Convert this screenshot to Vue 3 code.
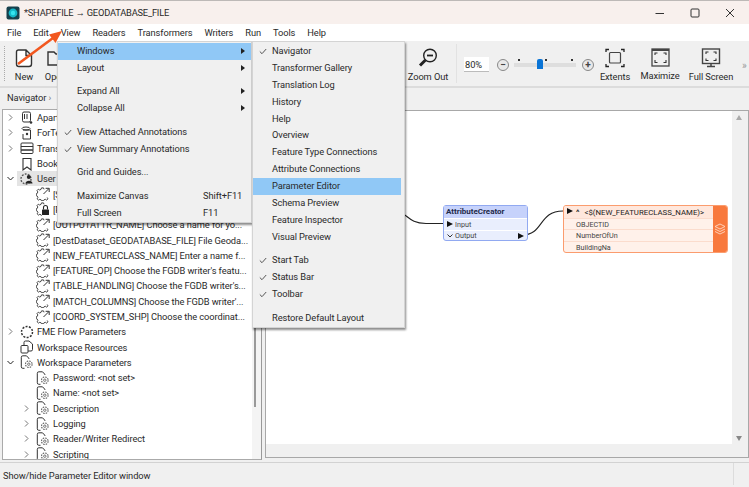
<template>
    <div class="app">
        <svg class="defs" width="0" height="0">
            <symbol id="gearlink" viewBox="0 0 14 14">
                <path d="M8 2.300L7.500 0.900H5.500L5 2.400L3.600 3L2.300 2.200L1 3.600L1.800 4.900L1.300 6.300L0.300 6.700V8.700L1.300 9.100L1.900 10.500L1.100 11.800L2.500 13.100L3.800 12.300L5.200 12.900L5.500 13.700H7.500L7.900 12.900L9.300 12.300L10.600 13.100L12 11.800L11.200 10.500" fill="none" stroke="#444" stroke-width="1"/>
                <path d="M7.500 7L12.800 1.700M9.600 1.300H13.200V5" fill="none" stroke="#333" stroke-width="1"/>
            </symbol>
            <symbol id="gearlock" viewBox="0 0 14 14">
                <path d="M8 2.300L7.500 0.900H5.500L5 2.400L3.600 3L2.300 2.200L1 3.600L1.800 4.900L1.300 6.300L0.300 6.700V8.700L1.300 9.100L1.900 10.500L1.100 11.800L2.500 13.100L3.800 12.300L5.200 12.900L5.500 13.700" fill="none" stroke="#444" stroke-width="1"/>
                <rect x="6" y="7.500" width="7" height="5.500" rx="0.500" fill="#222"/>
                <path d="M7.500 7.500V5.500a2 2 0 0 1 4 0V7.500" fill="none" stroke="#222" stroke-width="1.100"/>
            </symbol>
            <symbol id="filegear" viewBox="0 0 14 14">
                <path d="M4.500 13.300H2.800A1.500 1.500 0 0 1 1.300 11.800V2.300A1.500 1.500 0 0 1 2.800 0.800H6.500L8.800 3.200V4" fill="none" stroke="#333" stroke-width="1"/>
                <circle cx="8.800" cy="9.200" r="1.200" fill="none" stroke="#555" stroke-width="0.800"/>
                <circle cx="8.800" cy="9.200" r="3.300" fill="none" stroke="#555" stroke-width="1.100" stroke-dasharray="1.500 1.100"/>
            </symbol>
        </svg>

        <!-- title -->
        <div class="titlebar">
            <svg class="app-icon" width="14" height="14" viewBox="0 0 14 14">
                <rect x="0.500" y="0.500" width="13" height="13" rx="2" fill="#17404c"/>
                <circle cx="7" cy="7" r="4.400" fill="#14b8c8"/>
                <circle cx="7" cy="7" r="2.200" fill="#35e4ee"/>
            </svg>
            <span class="title-text">*SHAPEFILE → GEODATABASE_FILE</span>
            <div class="win-controls">
                <svg width="12" height="12" viewBox="0 0 12 12"><path d="M1.500 6.500H10" stroke="#333" stroke-width="1"/></svg>
                <svg width="12" height="12" viewBox="0 0 12 12"><rect x="2" y="2" width="8" height="8" rx="1" fill="none" stroke="#333" stroke-width="1"/></svg>
                <svg width="12" height="12" viewBox="0 0 12 12"><path d="M2 2L10 10M10 2L2 10" stroke="#333" stroke-width="1"/></svg>
            </div>
        </div>

        <div class="menubar">
            <span v-for="m in menus" :key="m">{{ m }}</span>
        </div>

        <!-- toolbar -->
        <div class="toolbar">
            <div class="grip"></div>
            <div class="tool tool-new">
                <svg width="20" height="20" viewBox="0 0 20 20">
                    <path d="M4.500 2H12L17.500 7.500V16A2.500 2.500 0 0 1 15 18.500H5A2.500 2.500 0 0 1 2.500 16V4A2 2 0 0 1 4.500 2ZM12 2V7.500H17.500" fill="#fff" stroke="#333" stroke-width="1.400"/>
                </svg>
                <span>New</span>
            </div>
            <div class="tool tool-open">
                <svg width="20" height="20" viewBox="0 0 20 20">
                    <path d="M2 17V4H8L10 6H18V17Z" fill="none" stroke="#333" stroke-width="1.400"/>
                </svg>
                <span>Open</span>
            </div>
            <div class="tool tool-zoom">
                <svg width="22" height="20" viewBox="0 0 22 20">
                    <circle cx="13" cy="7.500" r="6.300" fill="none" stroke="#222" stroke-width="1.400"/>
                    <path d="M10 7.500H16" stroke="#222" stroke-width="1.800"/>
                    <path d="M8.500 12L3 17.500" stroke="#222" stroke-width="3"/>
                </svg>
                <span>Zoom Out</span>
            </div>
            <div class="tool-sep"></div>
            <div class="zoom-input">80%</div>
            <div class="zoom-btn zoom-minus">−</div>
            <div class="slider">
                <i class="tick t1"></i><i class="tick t2"></i><i class="tick t3"></i>
                <i class="thumb"></i>
            </div>
            <div class="zoom-btn zoom-plus">+</div>
            <div class="tool tool-extents">
                <svg width="20" height="20" viewBox="0 0 20 20">
                    <rect x="4.500" y="4.500" width="11" height="10.500" rx="1" fill="none" stroke="#444" stroke-width="1.200"/>
                    <path d="M1 4V1.500H4M16 1.500H19V4M19 16V18.500H16M4 18.500H1V16" fill="none" stroke="#222" stroke-width="1.300"/>
                </svg>
                <span>Extents</span>
            </div>
            <div class="tool tool-max">
                <svg width="19" height="19" viewBox="0 0 19 19">
                    <rect x="1" y="1" width="17" height="17" fill="none" stroke="#444" stroke-width="1.300"/>
                    <path d="M1 2H18" stroke="#444" stroke-width="2"/>
                    <path d="M4 7V5H6.500M12.500 5H15V7M15 12V14.500H12.500M6.500 14.500H4V12" fill="none" stroke="#333" stroke-width="1.100"/>
                </svg>
                <span>Maximize</span>
            </div>
            <div class="tool tool-full">
                <svg width="20" height="20" viewBox="0 0 20 20">
                    <rect x="1.500" y="1" width="17" height="14.500" fill="none" stroke="#444" stroke-width="1.400"/>
                    <path d="M5 6V4H7.500M12.500 4H15V6M15 10.500V12.500H12.500M7.500 12.500H5V10.500" fill="none" stroke="#333" stroke-width="1.100"/>
                    <path d="M6 18.500H14M10 15.500V18.500" stroke="#444" stroke-width="1.500"/>
                </svg>
                <span>Full Screen</span>
            </div>
            <div class="more">»</div>
        </div>

        <!-- main area -->
        <div class="work">
            <div class="left">
                <div class="strip left-strip">Navigator <span class="strip-x">›</span></div>
                <div class="left-body">
                    <div class="tree">
                        <div
                            v-for="row in tree"
                            :key="row.text"
                            class="row"
                            :class="{ child: row.depth === 1 }"
                        >
                            <span class="twisty">
                                <svg v-if="row.twisty" width="7" height="7" viewBox="0 0 7 7">
                                    <path
                                        :d="row.twisty === 'open' ? 'M0.500 2L3.500 5L6.500 2' : 'M2 0.500L5 3.500L2 6.500'"
                                        fill="none"
                                        :stroke="row.twisty === 'open' ? '#222' : '#777'"
                                        stroke-width="1"
                                    />
                                </svg>
                            </span>
                            <span class="row-main" :class="{ picked: row.picked }">
                                <svg class="row-icon" width="14" height="14" viewBox="0 0 14 14">
                                    <template v-if="row.icon === 'source'">
                                        <rect x="2.500" y="1" width="8" height="10" rx="1.500" fill="none" stroke="#333"/>
                                        <path d="M4.500 3V8M7 3V8" stroke="#333"/>
                                        <circle cx="11" cy="11.500" r="1.300" fill="#333"/>
                                    </template>
                                    <template v-else-if="row.icon === 'dest'">
                                        <path d="M3 4H10.500V13H3V8" fill="none" stroke="#333"/>
                                        <ellipse cx="6" cy="2.500" rx="4" ry="1.500" fill="none" stroke="#333"/>
                                        <circle cx="7" cy="8" r="1.200" fill="#333"/>
                                    </template>
                                    <template v-else-if="row.icon === 'stack'">
                                        <rect x="1" y="2" width="12" height="3.500" rx="1" fill="none" stroke="#333"/>
                                        <rect x="1" y="5.500" width="12" height="3.500" fill="none" stroke="#333"/>
                                        <rect x="1" y="9" width="12" height="3.500" rx="1" fill="none" stroke="#333"/>
                                    </template>
                                    <path v-else-if="row.icon === 'mark'" d="M3 1.500H11V13L7 10L3 13Z" fill="none" stroke="#333" stroke-width="1.100"/>
                                    <template v-else-if="row.icon === 'user'">
                                        <circle cx="6" cy="7" r="5" fill="none" stroke="#555" stroke-width="1.400" stroke-dasharray="1.800 1.300"/>
                                        <circle cx="8.800" cy="5" r="2" fill="#222"/>
                                        <path d="M5.500 11.500C5.500 7.800 12.500 7.800 12.500 11.500Z" fill="#222"/>
                                    </template>
                                    <circle v-else-if="row.icon === 'flow'" cx="7" cy="7" r="5.500" fill="none" stroke="#333" stroke-width="1.500" stroke-dasharray="2 1.400"/>
                                    <template v-else-if="row.icon === 'res'">
                                        <rect x="1" y="5.500" width="7" height="7.500" rx="1" fill="none" stroke="#333"/>
                                        <path d="M4 5.500V2.500A1.500 1.500 0 0 1 5.500 1H9L12.500 4V9.500A1.500 1.500 0 0 1 11 11H8" fill="none" stroke="#333"/>
                                    </template>
                                    <use v-else :href="'#' + row.icon" width="14" height="14"/>
                                </svg>
                                <span class="row-text">{{ row.text }}</span>
                            </span>
                        </div>
                    </div>
                    <div class="tree-scroll"><i></i></div>
                </div>
            </div>

            <div class="splitter"></div>

            <div class="right">
                <div class="strip"></div>
                <div class="canvas-frame">
                    <div class="canvas-row">
                        <div class="canvas">
                            <svg class="wires" width="466" height="336" viewBox="0 0 466 336">
                                <path d="M125 98C143 101 140 112 160 112.500L180 112.500" fill="none" stroke="#222" stroke-width="1.100"/>
                                <path d="M256 124C278 124 272 100 297 100" fill="none" stroke="#222" stroke-width="1.100"/>
                            </svg>
                            <div class="node creator">
                                <div class="creator-head">AttributeCreator</div>
                                <div class="creator-row">
                                    <i class="port"></i><span class="row-label">Input</span>
                                </div>
                                <div class="creator-row">
                                    <svg class="out-chev" width="6" height="6" viewBox="0 0 6 6"><path d="M0.500 1.500L3 4L5.500 1.500" fill="none" stroke="#333"/></svg>
                                    <span class="row-label">Output</span>
                                    <i class="port port-out"></i>
                                </div>
                            </div>
                            <div class="node writer">
                                <div class="writer-main">
                                    <div class="writer-head">
                                        <i class="port"></i>
                                        <span class="caret">^</span>
                                        <span>&lt;$(NEW_FEATURECLASS_NAME)&gt;</span>
                                    </div>
                                    <div v-for="a in attrs" :key="a" class="writer-row">{{ a }}</div>
                                </div>
                                <div class="writer-side">
                                    <svg width="12" height="12" viewBox="0 0 12 12">
                                        <path d="M6 1L11 3.500L6 6L1 3.500Z M1 6L6 8.500L11 6 M1 8.500L6 11L11 8.500" fill="none" stroke="#ffd9c4" stroke-width="0.900"/>
                                    </svg>
                                </div>
                            </div>
                        </div>
                        <div class="vscroll">
                            <i class="arrow-up"></i>
                            <i class="arrow-down"></i>
                        </div>
                    </div>
                    <div class="hscroll"></div>
                </div>
            </div>
        </div>

        <div class="statusbar">
            <span>Show/hide Parameter Editor window</span>
            <i class="status-grip"></i>
        </div>

        <!-- open menus -->
        <div class="menu view-menu">
            <template v-for="(item, i) in viewMenu" :key="i">
                <div v-if="item.gap" class="menu-gap"></div>
                <div v-else class="menu-item" :class="{ hot: item.hot }">
                    <svg v-if="item.check" class="check" width="8" height="7" viewBox="0 0 8 7"><path d="M0.800 3.500L3 5.700L7.200 1" fill="none" stroke="#555" stroke-width="1"/></svg>
                    <span>{{ item.label }}</span>
                    <span v-if="item.key" class="shortcut">{{ item.key }}</span>
                    <i v-if="item.sub" class="sub-arrow"></i>
                </div>
            </template>
        </div>
        <div class="menu windows-menu">
            <template v-for="(item, i) in windowsMenu" :key="i">
                <div v-if="item.gap" class="menu-gap"></div>
                <div v-else class="menu-item" :class="{ hot: item.hot }">
                    <svg v-if="item.check" class="check" width="8" height="7" viewBox="0 0 8 7"><path d="M0.800 3.500L3 5.700L7.200 1" fill="none" stroke="#555" stroke-width="1"/></svg>
                    <span>{{ item.label }}</span>
                </div>
            </template>
        </div>

        <!-- callout arrow -->
        <svg class="callout" width="70" height="70" viewBox="0 0 70 70">
            <path d="M18 64L53 38" stroke="#f2571f" stroke-width="2.600"/>
            <path d="M62 31L49 34.500L55.500 43Z" fill="#f2571f"/>
        </svg>
    </div>
</template>

<script setup>
    const menus = ["File", "Edit", "View", "Readers", "Transformers", "Writers", "Run", "Tools", "Help"];

    const attrs = ["OBJECTID", "NumberOfUn", "BuildingNa"];

    const tree = [
        { text: "Apartments [SHAPEFILE]", icon: "source", twisty: "closed", depth: 0 },
        { text: "ForTesting [FILEGDB]", icon: "dest", twisty: "closed", depth: 0 },
        { text: "Transformers", icon: "stack", twisty: "closed", depth: 0 },
        { text: "Bookmarks", icon: "mark", depth: 0 },
        { text: "User Parameters", icon: "user", twisty: "open", depth: 0, picked: true },
        { text: "[SourceDataset_SHAPEFILE]", icon: "gearlink", depth: 1 },
        { text: "[PASSWORD]", icon: "gearlock", depth: 1 },
        { text: "[OUTPUTATTR_NAME] Choose a name for yo...", icon: "gearlink", depth: 1 },
        { text: "[DestDataset_GEODATABASE_FILE] File Geoda...", icon: "gearlink", depth: 1 },
        { text: "[NEW_FEATURECLASS_NAME] Enter a name f...", icon: "gearlink", depth: 1 },
        { text: "[FEATURE_OP] Choose the FGDB writer's featu...", icon: "gearlink", depth: 1 },
        { text: "[TABLE_HANDLING] Choose the FGDB writer's...", icon: "gearlink", depth: 1 },
        { text: "[MATCH_COLUMNS] Choose the FGDB writer'...", icon: "gearlink", depth: 1 },
        { text: "[COORD_SYSTEM_SHP] Choose the coordinat...", icon: "gearlink", depth: 1 },
        { text: "FME Flow Parameters", icon: "flow", twisty: "closed", depth: 0 },
        { text: "Workspace Resources", icon: "res", depth: 0 },
        { text: "Workspace Parameters", icon: "filegear", twisty: "open", depth: 0 },
        { text: "Password: <not set>", icon: "filegear", depth: 1 },
        { text: "Name: <not set>", icon: "filegear", depth: 1 },
        { text: "Description", icon: "filegear", twisty: "closed", depth: 1 },
        { text: "Logging", icon: "filegear", twisty: "closed", depth: 1 },
        { text: "Reader/Writer Redirect", icon: "filegear", twisty: "closed", depth: 1 },
        { text: "Scripting", icon: "filegear", twisty: "closed", depth: 1 },
    ];

    const viewMenu = [
        { label: "Windows", sub: true, hot: true },
        { label: "Layout", sub: true },
        { gap: true },
        { label: "Expand All", sub: true },
        { label: "Collapse All", sub: true },
        { gap: true },
        { label: "View Attached Annotations", check: true },
        { label: "View Summary Annotations", check: true },
        { gap: true },
        { label: "Grid and Guides..." },
        { gap: true },
        { label: "Maximize Canvas", key: "Shift+F11" },
        { label: "Full Screen", key: "F11" },
    ];

    const windowsMenu = [
        { label: "Navigator", check: true },
        { label: "Transformer Gallery" },
        { label: "Translation Log" },
        { label: "History" },
        { label: "Help" },
        { label: "Overview" },
        { label: "Feature Type Connections" },
        { label: "Attribute Connections" },
        { label: "Parameter Editor", hot: true },
        { label: "Schema Preview" },
        { label: "Feature Inspector" },
        { label: "Visual Preview" },
        { gap: true },
        { label: "Start Tab", check: true },
        { label: "Status Bar", check: true },
        { label: "Toolbar", check: true },
        { gap: true },
        { label: "Restore Default Layout" },
    ];
</script>

<style>
    html,
    body {
        margin: 0;
        background: #fff;
    }
</style>

<style scoped>
    .app {
        position: relative;
        width: 749px;
        height: 487px;
        display: flex;
        flex-direction: column;
        overflow: hidden;
        font-family: Roboto, "Liberation Sans", sans-serif;
        font-size: 9.300px;
        letter-spacing: -0.090px;
        color: #2a2a2a;
        background: #f0f0f0;
    }

    .defs {
        position: absolute;
    }

    .titlebar {
        height: 24px;
        flex: none;
        box-sizing: border-box;
        border-top: 1px solid #bdb9b7;
        background: #f8f0ed;
        display: flex;
        align-items: center;
        padding-left: 6px;
    }

    .title-text {
        margin-left: 4px;
        font-size: 9.300px;
        letter-spacing: -0.200px;
    }

    .win-controls {
        margin-left: auto;
        display: flex;
        gap: 23px;
        padding-right: 13px;
    }

    .menubar {
        height: 17px;
        flex: none;
        background: #fff;
        display: flex;
        align-items: center;
        gap: 12px;
        padding-left: 7px;
    }

    .toolbar {
        height: 47px;
        flex: none;
        box-sizing: border-box;
        background: #f0f0f0;
        border-bottom: 2px solid #dcdcdc;
        display: flex;
        position: relative;
    }

    .grip {
        width: 1px;
        margin: 5px 0 5px 4px;
        border-left: 1px dotted #aaa;
    }

    .tool {
        display: flex;
        flex-direction: column;
        align-items: center;
        padding-top: 7px;
        flex: none;
    }

    .tool span {
        margin-top: 2px;
        line-height: 14px;
        white-space: nowrap;
    }

    .tool-new {
        width: 34px;
        margin-left: 1px;
    }

    .tool-open {
        width: 29px;
    }

    .tool-zoom {
        width: 46px;
        margin-left: 335px;
    }

    .tool-sep {
        width: 1px;
        margin: 3px 0 3px 5px;
        background: #e2e2e2;
    }

    .zoom-input {
        width: 25px;
        height: 15px;
        margin: 16px 0 0 7px;
        background: #fff;
        border-bottom: 1px solid #bbb;
        line-height: 15px;
        padding-left: 1px;
        box-sizing: border-box;
    }

    .zoom-btn {
        width: 10px;
        height: 10px;
        margin-top: 18px;
        border: 1px solid #888;
        border-radius: 50%;
        background: #e8e8e8;
        line-height: 9px;
        font-size: 10px;
        font-weight: 700;
        text-align: center;
        color: #444;
    }

    .zoom-minus {
        margin-left: 8px;
    }

    .zoom-plus {
        margin-left: 6px;
    }

    .slider {
        position: relative;
        width: 62px;
        height: 4px;
        margin: 22px 0 0 5px;
        background: #dedede;
    }

    .tick {
        position: absolute;
        top: -4px;
        width: 1.500px;
        height: 1.500px;
        background: #333;
    }

    .t1 {
        left: 4px;
    }

    .t2 {
        left: 31px;
    }

    .t3 {
        left: 57px;
    }

    .thumb {
        position: absolute;
        left: 23px;
        top: -4px;
        width: 6px;
        height: 10px;
        background: #0a74d6;
        border-radius: 2px 2px 0 0;
    }

    .tool-extents {
        width: 36px;
        margin-left: 3px;
    }

    .tool-max {
        width: 46px;
        margin-left: 4px;
    }

    .tool-full {
        width: 50px;
        margin-left: 3px;
    }

    .more {
        margin: 19px 0 0 6px;
        color: #999;
        font-size: 10px;
    }

    .work {
        flex: 1;
        min-height: 0;
        display: flex;
    }

    .strip {
        height: 22px;
        flex: none;
        line-height: 20px;
        box-sizing: border-box;
        padding-left: 7px;
    }

    .left-strip {
        height: 21px;
    }

    .strip-x {
        color: #777;
    }

    .left {
        width: 262px;
        flex: none;
        display: flex;
        flex-direction: column;
    }

    .left-body {
        flex: 1;
        min-height: 0;
        margin-bottom: 2px;
        margin-left: 2px;
        display: flex;
        background: #fff;
        border: 1px solid #aaa;
        border-right: 1px solid #999;
        overflow: hidden;
    }

    .tree {
        width: 249px;
        flex: none;
        overflow: hidden;
    }

    .row {
        display: flex;
        align-items: center;
        height: 15.300px;
        white-space: nowrap;
    }

    .row.child {
        padding-left: 16px;
    }

    .twisty {
        width: 14px;
        flex: none;
        display: flex;
        justify-content: center;
        padding-left: 1px;
        box-sizing: border-box;
    }

    .row-main {
        display: flex;
        align-items: center;
        height: 100%;
        padding-left: 3px;
    }

    .picked {
        background: #e4e4e4;
    }

    .row-icon {
        flex: none;
        margin-right: 3px;
    }

    .tree-scroll {
        flex: 1;
        background: #f4f4f4;
        position: relative;
    }

    .tree-scroll i {
        position: absolute;
        left: 2px;
        top: 100px;
        bottom: 52px;
        width: 2px;
        background: #9a9a9a;
    }

    .splitter {
        width: 3px;
        flex: none;
    }

    .right {
        flex: 1;
        min-width: 0;
        display: flex;
        flex-direction: column;
    }

    .canvas-frame {
        flex: 1;
        min-height: 0;
        margin-bottom: 4px;
        border: 1px solid #a8a8a8;
        display: flex;
        flex-direction: column;
    }

    .canvas-row {
        flex: 1;
        min-height: 0;
        display: flex;
    }

    .canvas {
        flex: 1;
        position: relative;
        background: #fff;
        overflow: hidden;
    }

    .wires {
        position: absolute;
        left: 0;
        top: 0;
    }

    .vscroll {
        width: 16px;
        flex: none;
        position: relative;
        background: #f0f0f0;
    }

    .arrow-up,
    .arrow-down {
        position: absolute;
        left: 4px;
        width: 0;
        height: 0;
        border-left: 3.500px solid transparent;
        border-right: 3.500px solid transparent;
    }

    .arrow-up {
        top: 4px;
        border-bottom: 5px solid #aaa;
    }

    .arrow-down {
        bottom: 3px;
        border-top: 5px solid #888;
    }

    .hscroll {
        height: 13px;
        flex: none;
        background: #f0f0f0;
    }

    .node {
        position: absolute;
        box-sizing: border-box;
        font-size: 7.200px;
        letter-spacing: 0;
    }

    .creator {
        left: 177px;
        top: 94px;
        width: 85px;
        height: 36px;
        background: #e9eefd;
        border: 1px solid #91a9f1;
        border-radius: 3px;
    }

    .creator-head {
        height: 12px;
        background: #c6d2fb;
        line-height: 12px;
        padding-left: 2px;
        font-size: 8px;
        font-weight: 700;
        color: #1f2a4a;
    }

    .creator-row {
        height: 11.500px;
        line-height: 11.500px;
        display: flex;
        align-items: center;
        position: relative;
        border-top: 1px solid #fff;
        box-sizing: border-box;
    }

    .row-label {
        margin-left: 11px;
        color: #444;
    }

    .out-chev {
        position: absolute;
        left: 3px;
    }

    .port {
        position: absolute;
        left: 3px;
        top: 2px;
        width: 0;
        height: 0;
        border-top: 3.500px solid transparent;
        border-bottom: 3.500px solid transparent;
        border-left: 6px solid #111;
    }

    .port-out {
        left: auto;
        right: 3px;
    }

    .writer {
        left: 297px;
        top: 94px;
        width: 165px;
        height: 48px;
        display: flex;
        background: #fff1ea;
        border: 1px solid #fb9c6e;
        border-radius: 3px;
        overflow: hidden;
    }

    .writer-main {
        flex: 1;
    }

    .writer-head {
        position: relative;
        height: 11.500px;
        line-height: 13px;
        background: #ffe7dc;
        padding-left: 12px;
        display: flex;
        gap: 5px;
        white-space: nowrap;
        font-size: 7.800px;
        color: #222;
    }

    .caret {
        font-weight: 700;
    }

    .writer-row {
        height: 11.700px;
        line-height: 11.700px;
        padding-left: 12px;
        border-top: 1px solid #fbdccd;
        box-sizing: border-box;
        color: #444;
    }

    .writer-side {
        width: 14px;
        flex: none;
        background: #f8793d;
        display: flex;
        align-items: center;
        justify-content: center;
    }

    .statusbar {
        height: 25px;
        flex: none;
        box-sizing: border-box;
        border-top: 1px solid #d2d2d2;
        padding-left: 3px;
        display: flex;
        align-items: center;
        position: relative;
    }

    .status-grip {
        position: absolute;
        left: 733px;
        top: 0;
        bottom: 2px;
        width: 1px;
        background: #dcdcdc;
    }

    .menu {
        position: absolute;
        top: 41px;
        box-sizing: border-box;
        background: #f0f0f0;
        border: 1px solid #d4d4d4;
        padding: 1px 0 0;
        box-shadow: 1px 2px 2px rgba(0, 0, 0, 0.45);
    }

    .view-menu {
        left: 57px;
        width: 195px;
    }

    .windows-menu {
        left: 252px;
        width: 153px;
    }

    .windows-menu .menu-item.hot {
        margin-right: 3px;
    }

    .menu-item {
        position: relative;
        height: 16.900px;
        line-height: 16.900px;
        padding-left: 19px;
        white-space: nowrap;
    }

    .hot {
        background: #90c8f6;
    }

    .menu-gap {
        height: 6.700px;
    }

    .check {
        position: absolute;
        left: 6px;
        top: 5px;
    }

    .shortcut {
        position: absolute;
        left: 145px;
    }

    .sub-arrow {
        position: absolute;
        left: 183px;
        top: 5px;
        width: 0;
        height: 0;
        border-top: 3px solid transparent;
        border-bottom: 3px solid transparent;
        border-left: 4px solid #222;
    }

    .callout {
        position: absolute;
        left: 0;
        top: 0;
    }
</style>
